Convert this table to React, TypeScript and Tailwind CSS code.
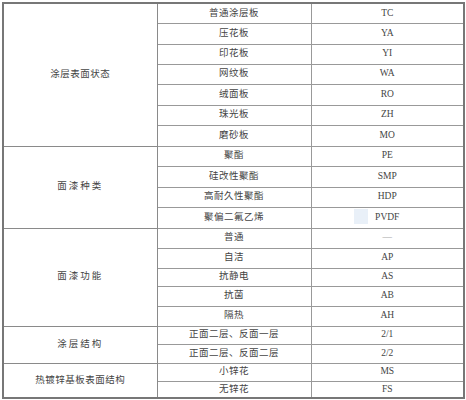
import React from 'react';

type Row = { name: string; code: string; h: string };
type Group = { label: string; track: string; rows: Row[] };

const groups: Group[] = [
  {
    label: '涂层表面状态',
    track: 'tracking-[0.5px]',
    rows: [
      { name: '普通涂层板', code: 'TC', h: 'h-[20px]' },
      { name: '压花板', code: 'YA', h: 'h-[21px]' },
      { name: '印花板', code: 'YI', h: 'h-[20px]' },
      { name: '网纹板', code: 'WA', h: 'h-[20px]' },
      { name: '绒面板', code: 'RO', h: 'h-[21px]' },
      { name: '珠光板', code: 'ZH', h: 'h-[20px]' },
      { name: '磨砂板', code: 'MO', h: 'h-[21px]' }
    ]
  },
  {
    label: '面漆种类',
    track: 'tracking-[2px]',
    rows: [
      { name: '聚酯', code: 'PE', h: 'h-[20px]' },
      { name: '硅改性聚酯', code: 'SMP', h: 'h-[21px]' },
      { name: '高耐久性聚酯', code: 'HDP', h: 'h-[20px]' },
      { name: '聚偏二氟乙烯', code: 'PVDF', h: 'h-[21px]' }
    ]
  },
  {
    label: '面漆功能',
    track: 'tracking-[2px]',
    rows: [
      { name: '普通', code: '—', h: 'h-[20px]' },
      { name: '自洁', code: 'AP', h: 'h-[20px]' },
      { name: '抗静电', code: 'AS', h: 'h-[18px]' },
      { name: '抗菌', code: 'AB', h: 'h-[20px]' },
      { name: '隔热', code: 'AH', h: 'h-[20px]' }
    ]
  },
  {
    label: '涂层结构',
    track: 'tracking-[2px]',
    rows: [
      { name: '正面二层、反面一层', code: '2/1', h: 'h-[18px]' },
      { name: '正面二层、反面二层', code: '2/2', h: 'h-[19px]' }
    ]
  },
  {
    label: '热镀锌基板表面结构',
    track: 'tracking-[0.5px]',
    rows: [
      { name: '小锌花', code: 'MS', h: 'h-[18px]' },
      { name: '无锌花', code: 'FS', h: 'h-[17px]' }
    ]
  }
];

const cjk = 'font-["Liberation_Serif","Noto_Sans_CJK_SC",serif]';

export default function App() {
  return (
    <div className="w-[466px] h-[400px] bg-white pt-[2px] pl-[2px] relative">
      <table className="w-[461px] table-fixed border-collapse border-2 border-[#777] text-[#444]">
        <colgroup>
          <col className="w-[154px]" />
          <col className="w-[154px]" />
          <col className="w-[153px]" />
        </colgroup>
        <tbody>
          {groups.map((g) =>
            g.rows.map((r, i) => (
              <tr key={g.label + r.name} className={r.h}>
                {i === 0 && (
                  <td
                    rowSpan={g.rows.length}
                    className={`border border-[#8a8a8a] text-center align-middle p-0 text-[9.5px] leading-none ${g.track} ${cjk}`}
                  >
                    {g.label}
                  </td>
                )}
                <td className={`border border-[#999] text-center align-middle p-0 text-[9.5px] leading-none tracking-[0.5px] ${cjk}`}>
                  {r.name}
                </td>
                <td
                  className={`border border-[#999] text-center align-middle p-0 text-[9.5px] leading-none font-["Liberation_Serif",serif] ${
                    r.code === '—' ? 'text-[#aaa]' : ''
                  }`}
                >
                  {r.code}
                </td>
              </tr>
            ))
          )}
        </tbody>
      </table>
      <div className="absolute left-[354px] top-[209px] w-[14px] h-[15px] bg-[#e3ecf6] opacity-80" />
    </div>
  );
}
